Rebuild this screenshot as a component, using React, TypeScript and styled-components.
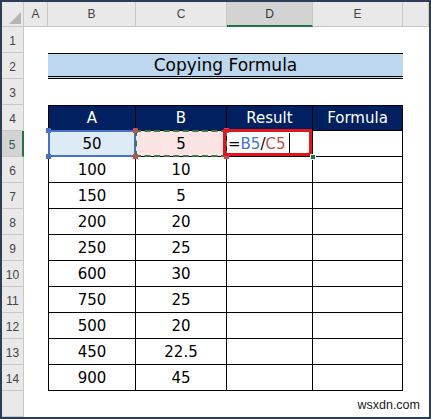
import React from "react";
import styled, { createGlobalStyle, css } from "styled-components";

const GlobalStyle = createGlobalStyle`
  html, body {
    margin: 0;
    padding: 0;
    background: #ffffff;
  }
  * {
    box-sizing: border-box;
  }
`;

const CELL_FONT = `"DejaVu Sans", "Verdana", sans-serif`;
const UI_FONT = `"Liberation Sans", Arial, sans-serif`;

const Frame = styled.div`
  position: relative;
  width: 431px;
  height: 419px;
  border: 2px solid #2e3d57;
  overflow: hidden;
  background: #ffffff;
`;

const Sheet = styled.div`
  display: grid;
  grid-template-columns: 22px 24px 88px 91px 86px 90px 1fr;
  grid-template-rows: 25px repeat(15, 26px);
`;

const headerBase = css`
  background: #e9e9e9;
  border-right: 1px solid #c8c8c8;
  border-bottom: 1px solid #c8c8c8;
  font-family: ${UI_FONT};
  font-size: 12px;
  color: #444;
  display: flex;
  justify-content: center;
`;

const Corner = styled.div`
  ${headerBase};
  align-items: flex-end;
  justify-content: flex-end;
  padding: 0 2px 2px 0;
`;

const ColHeader = styled.div<{ $active?: boolean }>`
  ${headerBase};
  align-items: center;
  ${({ $active }) =>
    $active &&
    css`
      background: #d3d3d3;
      border-bottom: 2px solid #217346;
      color: #333;
    `}
`;

const RowHeader = styled.div<{ $active?: boolean }>`
  ${headerBase};
  align-items: flex-end;
  padding-bottom: 4px;
  ${({ $active }) =>
    $active &&
    css`
      background: #d3d3d3;
      border-right: 2px solid #217346;
      color: #2f5f3f;
    `}
`;

const Blank = styled.div<{ $span?: number }>`
  ${({ $span }) => $span && `grid-column: span ${$span};`}
`;

const Title = styled.div`
  grid-column: span 4;
  background: #bdd7ee;
  border-top: 1px solid #000;
  border-bottom: 3px double #000;
  display: flex;
  align-items: center;
  justify-content: center;
  font-family: ${CELL_FONT};
  font-size: 17px;
  color: #000;
`;

const tableCell = css<{ $first?: boolean }>`
  position: relative;
  border-right: 1px solid #000;
  border-bottom: 1px solid #000;
  ${({ $first }) => $first && `border-left: 1px solid #000;`}
  display: flex;
  align-items: center;
  justify-content: center;
  font-family: ${CELL_FONT};
  font-size: 15px;
`;

const HeadCell = styled.div<{ $first?: boolean }>`
  ${tableCell};
  background: #002060;
  color: #ffffff;
  border-top: 1px solid #000;
`;

type Tone = "ref1" | "ref2" | "edit";

const DataCell = styled.div<{ $first?: boolean; $tone?: Tone }>`
  ${tableCell};
  color: #000;
  ${({ $tone }) => $tone === "ref1" && `background: #ddebf7;`}
  ${({ $tone }) => $tone === "ref2" && `background: #fce4e4;`}
  ${({ $tone }) =>
    $tone === "edit" &&
    css`
      justify-content: flex-start;
      padding-left: 1px;
    `}
`;

const RefOutline = styled.div<{ $dashed?: boolean }>`
  position: absolute;
  inset: -1px -1px -1px -1px;
  border: 2px ${({ $dashed }) => ($dashed ? "dashed #3b7d4a" : "solid #4472c4")};
  pointer-events: none;
`;

const Handle = styled.span<{ $color: string; $x: "left" | "right"; $y: "top" | "bottom" }>`
  position: absolute;
  width: 5px;
  height: 5px;
  background: ${({ $color }) => $color};
  ${({ $x }) => `${$x}: -3px;`}
  ${({ $y }) => `${$y}: -3px;`}
  z-index: 2;
`;

const EditBox = styled.div`
  position: absolute;
  left: -4px;
  top: -2px;
  width: 89px;
  height: 27px;
  border: 3px solid #e3141c;
  z-index: 3;
  pointer-events: none;
`;

const FillHandle = styled.span`
  position: absolute;
  right: -4px;
  bottom: -4px;
  width: 6px;
  height: 6px;
  background: #217346;
  border: 1px solid #ffffff;
  z-index: 4;
`;

const Token = styled.span<{ $c: string }>`
  color: ${({ $c }) => $c};
`;

const Caret = styled.span`
  display: inline-block;
  width: 1px;
  height: 21px;
  background: #000;
  margin-left: 3px;
`;

const Watermark = styled.div`
  position: absolute;
  right: 9px;
  bottom: 5px;
  font-family: ${UI_FONT};
  font-size: 12.5px;
  color: #1a1a1a;
`;

const columns = ["A", "B", "C", "D", "E", ""];

const data: [string, string][] = [
  ["50", "5"],
  ["100", "10"],
  ["150", "5"],
  ["200", "20"],
  ["250", "25"],
  ["600", "30"],
  ["750", "25"],
  ["500", "20"],
  ["450", "22.5"],
  ["900", "45"],
];

const Corners: React.FC<{ color: string }> = ({ color }) => (
  <>
    <Handle $color={color} $x="left" $y="top" />
    <Handle $color={color} $x="right" $y="top" />
    <Handle $color={color} $x="left" $y="bottom" />
    <Handle $color={color} $x="right" $y="bottom" />
  </>
);

export default function App() {
  return (
    <>
      <GlobalStyle />
      <Frame>
        <Sheet>
          <Corner>
            <svg width="12" height="12" viewBox="0 0 12 12">
              <polygon points="12,0 12,12 0,12" fill="#b4b4b4" />
            </svg>
          </Corner>
          {columns.map((c, i) => (
            <ColHeader key={i} $active={c === "D"}>
              {c}
            </ColHeader>
          ))}

          <RowHeader>1</RowHeader>
          <Blank $span={6} />

          <RowHeader>2</RowHeader>
          <Blank />
          <Title>Copying Formula</Title>
          <Blank />

          <RowHeader>3</RowHeader>
          <Blank $span={6} />

          <RowHeader>4</RowHeader>
          <Blank />
          <HeadCell $first>A</HeadCell>
          <HeadCell>B</HeadCell>
          <HeadCell>Result</HeadCell>
          <HeadCell>Formula</HeadCell>
          <Blank />

          {data.map(([a, b], i) => {
            const row = i + 5;
            const editing = row === 5;
            return (
              <React.Fragment key={row}>
                <RowHeader $active={editing}>{row}</RowHeader>
                <Blank />
                <DataCell $first $tone={editing ? "ref1" : undefined}>
                  {a}
                  {editing && (
                    <>
                      <RefOutline />
                      <Corners color="#4472c4" />
                    </>
                  )}
                </DataCell>
                <DataCell $tone={editing ? "ref2" : undefined}>
                  {b}
                  {editing && (
                    <>
                      <RefOutline $dashed />
                      <Corners color="#c0504d" />
                    </>
                  )}
                </DataCell>
                <DataCell $tone={editing ? "edit" : undefined}>
                  {editing && (
                    <>
                      <Token $c="#000">=</Token>
                      <Token $c="#4472c4">B5</Token>
                      <Token $c="#000">/</Token>
                      <Token $c="#c0504d">C5</Token>
                      <Caret />
                      <EditBox />
                      <FillHandle />
                    </>
                  )}
                </DataCell>
                <DataCell />
                <Blank />
              </React.Fragment>
            );
          })}

          <RowHeader />
          <Blank $span={6} />
        </Sheet>
        <Watermark>wsxdn.com</Watermark>
      </Frame>
    </>
  );
}
